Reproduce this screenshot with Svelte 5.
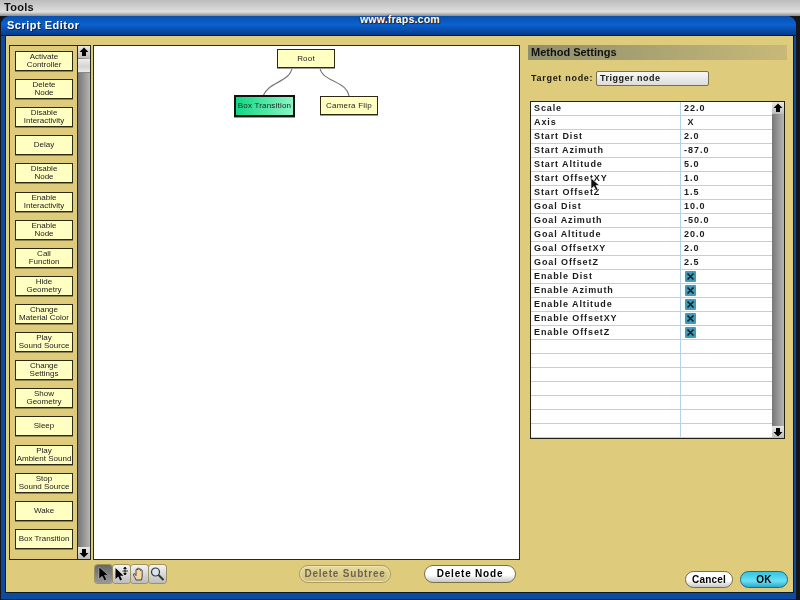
<script>
  const palette = [
    'Activate\nController', 'Delete\nNode', 'Disable\nInteractivity', 'Delay',
    'Disable\nNode', 'Enable\nInteractivity', 'Enable\nNode', 'Call\nFunction',
    'Hide\nGeometry', 'Change\nMaterial Color', 'Play\nSound Source', 'Change\nSettings',
    'Show\nGeometry', 'Sleep', 'Play\nAmbient Sound', 'Stop\nSound Source',
    'Wake', 'Box Transition'
  ]

  const rows = [
    ['Scale', '22.0'], ['Axis', ' X'], ['Start Dist', '2.0'], ['Start Azimuth', '-87.0'],
    ['Start Altitude', '5.0'], ['Start OffsetXY', '1.0'], ['Start OffsetZ', '1.5'],
    ['Goal Dist', '10.0'], ['Goal Azimuth', '-50.0'], ['Goal Altitude', '20.0'],
    ['Goal OffsetXY', '2.0'], ['Goal OffsetZ', '2.5'],
    ['Enable Dist', true], ['Enable Azimuth', true], ['Enable Altitude', true],
    ['Enable OffsetXY', true], ['Enable OffsetZ', true],
    ['', ''], ['', ''], ['', ''], ['', ''], ['', ''], ['', ''], ['', '']
  ]
</script>

{#snippet arrow(down)}
  <svg class="arrow" width="12" height="12" viewBox="0 0 12 12">
    <path d={down ? 'M4 2h4v4h2.500L6 10.500 1.500 6H4z' : 'M6 1.500 10.500 6H8v4H4V6H1.500z'} fill="#000" />
  </svg>
{/snippet}

<div class="menubar">Tools</div>

<div class="window">
  <div class="title">Script Editor</div>
  <div class="body">
    <div class="left">
      <div class="top">
        <div class="palette">
          <div class="list">
            {#each palette as item}
              <div class="item">{item}</div>
            {/each}
          </div>
          <div class="scroll">
            <div class="sbtn">{@render arrow(false)}</div>
            <div class="thumb"></div>
            <div class="track"></div>
            <div class="sbtn">{@render arrow(true)}</div>
          </div>
        </div>
        <div class="canvas">
          <svg class="edges" width="425" height="100" viewBox="0 0 425 100">
            <path d="M198 22c-2 14-24 14-29 28" />
            <path d="M226 22c2 14 26 12 29 28" />
          </svg>
          <div class="node root">Root</div>
          <div class="node selected">Box Transition</div>
          <div class="node flip">Camera Flip</div>
        </div>
      </div>
      <div class="bottom">
        <div class="tools">
          <div class="tool active">
            <svg width="15" height="16" viewBox="0 0 15 16"><path d="M3 1v12l3.200-2.800 2.200 4.500 2.300-1.100-2.200-4.400h4z" fill="#000" stroke="#ccc" stroke-width=".5" /></svg>
          </div>
          <div class="tool">
            <svg width="15" height="16" viewBox="0 0 15 16"><path d="M1.500 2v11l2.800-2.500 1.900 3.900 1.800-.9-1.900-3.800h3.400z" fill="#000" /><path d="M11 2v6M8.500 5h5.500M11 1 9.700 2.500h2.600zM11 9 9.700 7.500h2.600z" stroke="#000" fill="#000" stroke-width=".8" /></svg>
          </div>
          <div class="tool">
            <svg width="15" height="16" viewBox="0 0 15 16"><path d="M4 14C3 11 1 9 1.500 8s2 .5 2.500 1.500V4c0-1.200 1.500-1.200 1.500 0V3c0-1.200 1.600-1.200 1.600 0v.5c0-1.100 1.600-1.100 1.600 0v1c0-1 1.500-1 1.500.2 0 3 .3 5.300-.7 9.300z" fill="#f3d7a4" stroke="#222" stroke-width=".8" /></svg>
          </div>
          <div class="tool">
            <svg width="15" height="16" viewBox="0 0 15 16"><circle cx="5.500" cy="6" r="4" fill="#d8e4f0" stroke="#333" stroke-width="1.200" /><path d="M8.500 9l5 5" stroke="#333" stroke-width="2" /></svg>
          </div>
        </div>
        <button class="pill disabled">Delete Subtree</button>
        <button class="pill delete">Delete Node</button>
      </div>
    </div>

    <div class="right">
      <div class="heading">Method Settings</div>
      <div class="target">
        <span class="target-label">Target node:</span>
        <div class="field">Trigger node</div>
      </div>
      <div class="table">
        <div class="rows">
          {#each rows as [label, value]}
            <div class="row">
              <div class="name">{label}</div>
              <div class="value">
                {#if value === true}
                  <span class="check">
                    <svg width="9" height="9" viewBox="0 0 9 9"><path d="M1.500 1.500l6 6M7.500 1.500l-6 6" stroke="#0c2530" stroke-width="1.700" /></svg>
                  </span>
                {:else}
                  {value}
                {/if}
              </div>
            </div>
          {/each}
        </div>
        <div class="scroll">
          <div class="sbtn">{@render arrow(false)}</div>
          <div class="track"></div>
          <div class="sbtn">{@render arrow(true)}</div>
        </div>
      </div>
      <div class="actions">
        <button class="pill cancel">Cancel</button>
        <button class="pill ok">OK</button>
      </div>
    </div>
  </div>
</div>

<div class="fraps">www.fraps.com</div>

<svg class="cursor" width="11" height="15" viewBox="0 0 11 15">
  <path d="M1 1v11l3-2.500 2 4 2-1-2-4h3.500z" fill="#111" stroke="#fff" stroke-width=".6" />
</svg>

<style>
  :global(body) {
    background: #14161c;
    font-family: "Liberation Sans", sans-serif;
    overflow: hidden;
  }

  .menubar {
    height: 16px;
    padding-left: 4px;
    font: bold 11px/14px "Liberation Sans", sans-serif;
    letter-spacing: 0.3px;
    color: #111;
    background: linear-gradient(#bcbcbc, #dedede 75%, #8a8a8a);
    filter: blur(0.3px);
  }

  .fraps {
    position: absolute;
    top: 13px;
    left: 360px;
    font: bold 10.500px/12px "Liberation Sans", sans-serif;
    letter-spacing: 0.2px;
    color: #fff;
    text-shadow: 1px 1px 1px #222, -1px 0 1px #222;
  }

  .window {
    height: 577px;
    margin: 0 4px 0 1px;
    padding: 0 2px 6px 4px;
    display: flex;
    flex-direction: column;
    background: #0b4c9f;
    border-radius: 9px 9px 0 0;
    border-bottom: 1px solid #08234d;
    filter: blur(0.3px);
  }

  .title {
    height: 19px;
    flex: none;
    font: bold 11px/19px "Liberation Sans", sans-serif;
    letter-spacing: 0.5px;
    color: #fff;
    text-shadow: 1px 1px 0 #08264f;
    background: linear-gradient(#0b4fa8, #0a62d0 45%, #063a8c);
    margin: 0 -2px 0 -4px;
    padding-left: 6px;
    border-radius: 9px 9px 0 0;
    border-bottom: 1px solid #06142a;
  }

  .body {
    flex: 1;
    display: flex;
    background: #dfcb7c;
    border: 1px solid #0b1a2a;
    border-top: none;
    padding: 9px 0 0 3px;
    min-height: 0;
  }

  .left {
    width: 511px;
    display: flex;
    flex-direction: column;
  }

  .top {
    display: flex;
    gap: 2px;
    height: 515px;
  }

  .palette {
    width: 82px;
    box-sizing: border-box;
    display: flex;
    border: 1px solid #2a2818;
  }

  .list {
    width: 68px;
    box-sizing: border-box;
    padding: 5px 0 10px 5px;
    display: flex;
    flex-direction: column;
    justify-content: space-between;
    background: #dfcb7c;
    border-right: 1px solid #2a2818;
  }

  .item {
    width: 58px;
    height: 20px;
    box-sizing: border-box;
    display: flex;
    align-items: center;
    justify-content: center;
    text-align: center;
    white-space: pre-line;
    font: 8px/8px "Liberation Sans", sans-serif;
    color: #222;
    background: #ffffc2;
    border: 1px solid #2c2a14;
    box-shadow: 0 1px 0 #8f8450;
  }

  .scroll {
    width: 12px;
    flex: none;
    display: flex;
    flex-direction: column;
    background: linear-gradient(90deg, #777, #b5b5b5);
  }

  .sbtn {
    height: 12px;
    flex: none;
    background: linear-gradient(#e8e8e8, #bdbdbd);
  }

  .arrow {
    display: block;
  }

  .thumb {
    height: 13px;
    margin-top: 1px;
    flex: none;
    background: linear-gradient(#ececec, #d4d4d4 60%, #ececec);
    border-bottom: 1px solid #888;
  }

  .track {
    flex: 1;
  }

  .canvas {
    width: 427px;
    box-sizing: border-box;
    position: relative;
    background: #fff;
    border: 1px solid #2a2818;
  }

  .edges {
    position: absolute;
    top: 0;
    left: 0;
  }

  .edges path {
    fill: none;
    stroke: #777;
    stroke-width: 1.200;
  }

  .node {
    position: absolute;
    height: 19px;
    box-sizing: border-box;
    display: flex;
    align-items: center;
    justify-content: center;
    font: 8px/8px "Liberation Sans", sans-serif;
    letter-spacing: 0.2px;
    color: #222;
    background: #ffffc2;
    border: 1px solid #2c2a14;
    box-shadow: 0 1px 0 #999;
  }

  .root {
    left: 183px;
    top: 3px;
    width: 58px;
  }

  .flip {
    left: 226px;
    top: 50px;
    width: 58px;
  }

  .selected {
    left: 140px;
    top: 49px;
    width: 61px;
    height: 22px;
    border: 2px solid #111;
    background: linear-gradient(90deg, #0fd884, #8cf5c4);
  }

  .bottom {
    flex: 1;
    padding-top: 5px;
    display: flex;
    align-items: flex-start;
    padding-left: 86px;
  }

  .tools {
    display: flex;
    gap: 1px;
    margin-right: 133px;
  }

  .tool {
    width: 17px;
    height: 18px;
    display: flex;
    align-items: center;
    justify-content: center;
    border-radius: 3px;
    background: linear-gradient(#f4f4f4, #bdbdbd);
    box-shadow: 0 0 0 1px #9d9264;
  }

  .tool.active {
    background: linear-gradient(#666, #999);
  }

  .pill {
    height: 18px;
    width: 92px;
    padding: 0;
    white-space: nowrap;
    font: bold 10px/14px "Liberation Sans", sans-serif;
    letter-spacing: 0.8px;
    color: #000;
    border-radius: 9px;
    border: 1px solid #77704a;
    background: linear-gradient(#fff 55%, #c8c8c8);
  }

  .disabled {
    margin-right: 33px;
    color: #6a6550;
    background: linear-gradient(#e9dca0, #cfbd78);
    border-color: #a89a62;
    box-shadow: inset 0 0 0 1px #efe4b4;
  }

  .right {
    width: 259px;
    margin-left: 8px;
    display: flex;
    flex-direction: column;
  }

  .heading {
    height: 15px;
    padding-left: 3px;
    font: bold 11px/15px "Liberation Sans", sans-serif;
    color: #111;
    background: linear-gradient(90deg, #8f8f6c, #c8b978);
  }

  .target {
    margin: 11px 0 0 3px;
    display: flex;
    align-items: center;
    gap: 3px;
    font: bold 9px/15px "Liberation Sans", sans-serif;
    letter-spacing: 0.7px;
    color: #1b1b10;
  }

  .target-label {
    width: 62px;
    white-space: nowrap;
  }

  .field {
    width: 113px;
    height: 15px;
    box-sizing: border-box;
    padding-left: 3px;
    line-height: 13px;
    letter-spacing: 0.5px;
    border: 1px solid #77704a;
    border-radius: 2px;
    background: linear-gradient(#f8f8f8, #dcdcdc);
  }

  .table {
    width: 255px;
    height: 338px;
    margin: 15px 0 0 2px;
    box-sizing: border-box;
    display: flex;
    background: #fff;
    border: 1px solid #22200f;
  }

  .rows {
    width: 241px;
  }

  .row {
    height: 14px;
    box-sizing: border-box;
    display: flex;
    border-bottom: 1px solid #b5d3e8;
    font: bold 9px/13px "Liberation Sans", sans-serif;
    letter-spacing: 0.9px;
    color: #1a1a1a;
  }

  .name {
    width: 150px;
    box-sizing: border-box;
    padding-left: 3px;
    border-right: 1px solid #b5d3e8;
  }

  .value {
    padding-left: 3px;
    white-space: pre;
    letter-spacing: 1px;
    display: flex;
    align-items: center;
  }

  .check {
    width: 11px;
    height: 11px;
    margin-left: 1px;
    display: flex;
    align-items: center;
    justify-content: center;
    border-radius: 1px;
    background: #3d9db8;
  }

  .actions {
    margin: 132px -1px 0 0;
    display: flex;
    justify-content: flex-end;
    gap: 7px;
  }

  .actions .pill {
    width: 48px;
    height: 17px;
    letter-spacing: 0.2px;
  }

  .ok {
    background: linear-gradient(#35c4e4, #6be0f4 60%, #2ea9cc);
    border-color: #1a6c88;
  }

  .cursor {
    position: absolute;
    left: 590px;
    top: 177px;
  }
</style>
